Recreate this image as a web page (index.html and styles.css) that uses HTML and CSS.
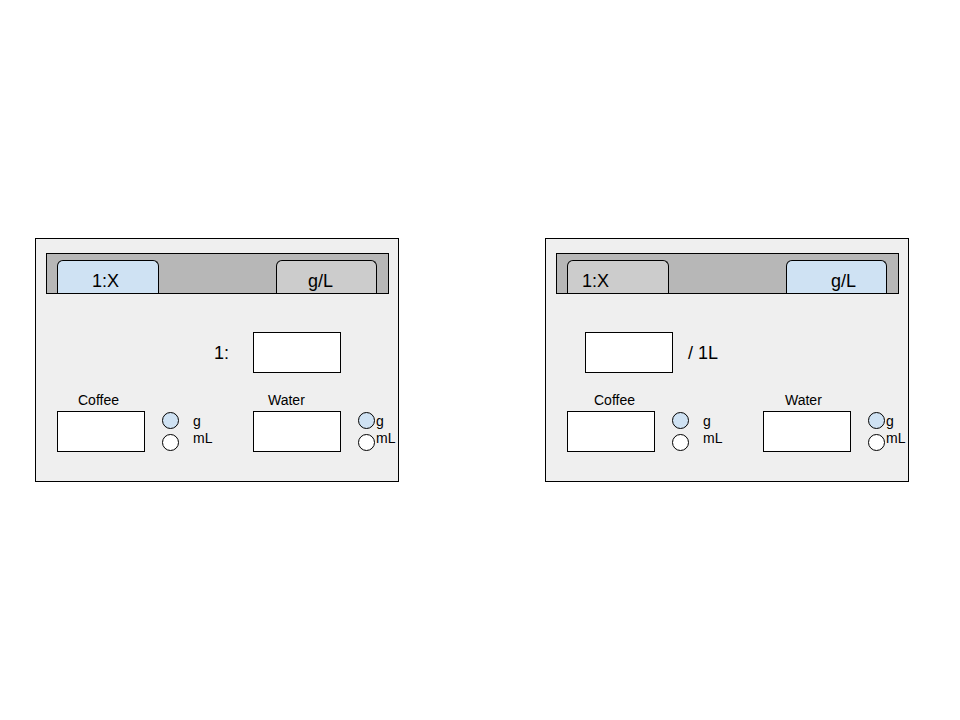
FILE: index.html
```html
<!DOCTYPE html>
<html lang="en">
<head>
<meta charset="utf-8">
<title>Coffee ratio calculator</title>
<link rel="stylesheet" href="styles.css">
</head>
<body>
<main class="canvas">
  <section class="panel">
    <div class="tabbar">
      <div class="tab tab--active tab--a">1:X</div>
      <div class="tab tab--b">g/L</div>
    </div>
    <div class="ratio-row ratio-row--ratio">
      <span class="ratio-label ratio-label--before">1:</span>
      <div class="field"></div>
    </div>
    <div class="amounts">
      <div class="amount">
        <div class="amount-label amount-label--coffee-a">Coffee</div>
        <div class="amount-body">
          <div class="field"></div>
          <div class="radios"><span class="radio radio--on"></span><span class="radio"></span></div>
          <div class="unit-labels"><span>g</span><span>mL</span></div>
        </div>
      </div>
      <div class="amount">
        <div class="amount-label amount-label--water-a">Water</div>
        <div class="amount-body">
          <div class="field"></div>
          <div class="radios"><span class="radio radio--on"></span><span class="radio"></span></div>
          <div class="unit-labels unit-labels--tight"><span>g</span><span>mL</span></div>
        </div>
      </div>
    </div>
  </section>

  <section class="panel">
    <div class="tabbar">
      <div class="tab tab--c">1:X</div>
      <div class="tab tab--active tab--d">g/L</div>
    </div>
    <div class="ratio-row ratio-row--conc">
      <div class="field"></div>
      <span class="ratio-label ratio-label--after">/ 1L</span>
    </div>
    <div class="amounts">
      <div class="amount">
        <div class="amount-label amount-label--coffee-b">Coffee</div>
        <div class="amount-body">
          <div class="field"></div>
          <div class="radios"><span class="radio radio--on"></span><span class="radio"></span></div>
          <div class="unit-labels"><span>g</span><span>mL</span></div>
        </div>
      </div>
      <div class="amount">
        <div class="amount-label amount-label--water-b">Water</div>
        <div class="amount-body">
          <div class="field"></div>
          <div class="radios"><span class="radio radio--on"></span><span class="radio"></span></div>
          <div class="unit-labels unit-labels--tight"><span>g</span><span>mL</span></div>
        </div>
      </div>
    </div>
  </section>
</main>
</body>
</html>
```
FILE: styles.css
```css
* { box-sizing: border-box; }

body {
  margin: 0;
  background: #ffffff;
  color: #000000;
  font-family: "Liberation Sans", Arial, sans-serif;
}

.canvas {
  display: flex;
  gap: 146px;
  padding: 238px 0 0 35px;
}

.panel {
  width: 364px;
  height: 244px;
  border: 1px solid #000;
  background: #efefef;
  padding: 14px 0 0 10px;
}

.tabbar {
  width: 343px;
  height: 41px;
  border: 1px solid #000;
  background: #b7b7b7;
  display: flex;
  justify-content: space-between;
  align-items: flex-end;
  padding: 0 11px 0 10px;
}

.tab {
  height: 33px;
  border: 1px solid #000;
  border-bottom: none;
  border-radius: 6px 6px 0 0;
  background: #cccccc;
  font-size: 18px;
  line-height: 20px;
  padding-top: 10px;
  white-space: nowrap;
}

.tab--active { background: #cfe2f3; }

.tab--a { width: 102px; padding-left: 34px; }
.tab--b { width: 101px; padding-left: 31px; }
.tab--c { width: 102px; padding-left: 14px; }
.tab--d { width: 101px; padding-left: 44px; }

.ratio-row {
  display: flex;
  align-items: center;
  margin-top: 38px;
  height: 41px;
}

.ratio-row--ratio { padding-left: 168px; }
.ratio-row--conc { padding-left: 29px; }

.ratio-label {
  font-size: 18px;
  line-height: 20px;
  margin-top: 1px;
  white-space: nowrap;
}

.ratio-label--before { margin-right: 24px; }
.ratio-label--after { margin-left: 15px; }

.field {
  width: 88px;
  height: 41px;
  border: 1px solid #000;
  background: #ffffff;
  flex: none;
}

.amounts {
  display: grid;
  grid-template-columns: 196px auto;
  margin-top: 19px;
  padding-left: 11px;
}

.amount-label {
  font-size: 14px;
  line-height: 16px;
  margin-bottom: 3px;
}

.amount-label--coffee-a { padding-left: 21px; }
.amount-label--water-a { padding-left: 15px; }
.amount-label--coffee-b { padding-left: 27px; }
.amount-label--water-b { padding-left: 22px; }

.amount-body {
  display: flex;
  align-items: flex-start;
}

.radios {
  display: flex;
  flex-direction: column;
  gap: 5px;
  margin-left: 17px;
  margin-top: 1px;
}

.radio {
  display: block;
  width: 17px;
  height: 17px;
  border: 1px solid #000;
  border-radius: 50%;
  background: #ffffff;
}

.radio--on { background: #cfe2f3; }

.unit-labels {
  display: flex;
  flex-direction: column;
  font-size: 14px;
  line-height: 17px;
  margin-top: 2px;
  margin-left: 14px;
  white-space: nowrap;
}

.unit-labels--tight { margin-left: 1px; }
```
